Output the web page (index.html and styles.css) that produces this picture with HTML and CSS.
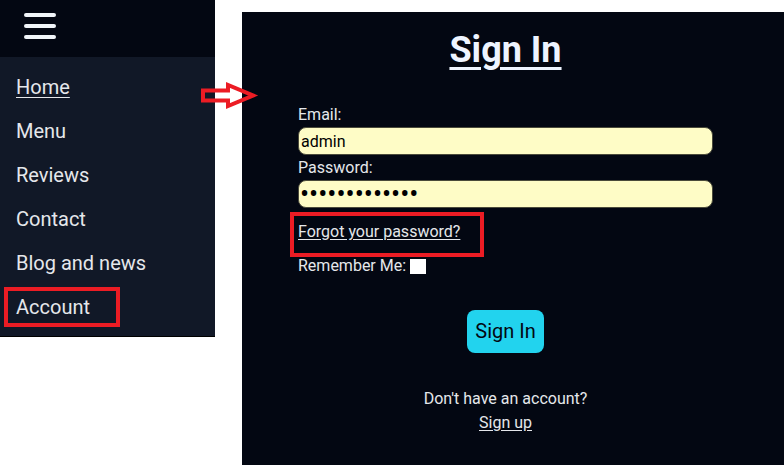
FILE: index.html
```html
<!DOCTYPE html>
<html lang="en">
<head>
<meta charset="utf-8">
<title>Sign In</title>
<link rel="stylesheet" href="styles.css">
</head>
<body>
<div class="page">
  <aside class="drawer">
    <div class="drawer-head">
      <span class="burger"><span></span><span></span><span></span></span>
    </div>
    <nav class="nav">
      <a class="nav-item current" href="#">Home</a>
      <a class="nav-item" href="#">Menu</a>
      <a class="nav-item" href="#">Reviews</a>
      <a class="nav-item" href="#">Contact</a>
      <a class="nav-item" href="#">Blog and news</a>
      <a class="nav-item marked" href="#">Account</a>
    </nav>
  </aside>
  <main class="panel">
    <div class="column">
      <h1 class="title">Sign In</h1>
      <form class="form">
        <label class="label" for="email">Email:</label>
        <input class="field" id="email" type="text" value="admin">
        <label class="label" for="pw">Password:</label>
        <input class="field pw" id="pw" type="password" value="password12345">
        <div class="forgot-row"><a class="forgot" href="#">Forgot your password?</a></div>
        <div class="remember">Remember Me:<input class="check" type="checkbox"></div>
        <div class="actions"><button class="btn" type="button">Sign In</button></div>
      </form>
      <p class="signup-q">Don't have an account?</p>
      <a class="signup" href="#">Sign up</a>
    </div>
  </main>
  <svg class="arrow" width="60" height="32" viewBox="200 80 60 32">
    <polygon points="203,90.5 228,90.5 228,85 253,95.5 228,106 228,100.5 203,100.5" fill="none" stroke="#ec1c24" stroke-width="4" stroke-linejoin="miter"/>
  </svg>
</div>
</body>
</html>
```

FILE: styles.css
```css
html, body {
  margin: 0;
  padding: 0;
  background: #ffffff;
  height: 100%;
  overflow: hidden;
}
body {
  font-family: Roboto, "Liberation Sans", Arial, sans-serif;
}
.page {
  position: relative;
  display: flex;
  align-items: flex-start;
  height: 465px;
}
.drawer {
  width: 215px;
  flex: none;
  background: #111827;
  border-bottom: 1px solid #000;
}
.drawer-head {
  height: 57px;
  background: #030712;
  padding: 13px 0 0 24px;
  box-sizing: border-box;
}
.burger {
  display: flex;
  flex-direction: column;
  gap: 7px;
  width: 32px;
}
.burger span {
  display: block;
  height: 4px;
  border-radius: 2px;
  background: #f1f5f9;
}
.nav {
  display: flex;
  flex-direction: column;
  padding: 8px 0 7px;
}
.nav-item {
  display: block;
  height: 44px;
  line-height: 44px;
  padding-left: 16px;
  font-size: 20px;
  color: #e5e7eb;
  text-decoration: none;
}
.nav-item.current {
  text-decoration: underline;
  text-underline-offset: 3px;
  text-decoration-thickness: 1px;
}
.nav-item.marked {
  position: relative;
}
.nav-item.marked::after {
  content: "";
  position: absolute;
  left: 4px;
  top: 2px;
  width: 116px;
  height: 40px;
  box-sizing: border-box;
  border: 4px solid #ec1c24;
}
.panel {
  flex: 1;
  margin: 12px 0 0 27px;
  height: 453px;
  background: #030712;
  color: #e5e7eb;
}
.column {
  width: 415px;
  margin-left: 56px;
  display: flex;
  flex-direction: column;
  align-items: center;
}
.title {
  margin: 17px 0 0;
  font-size: 36px;
  line-height: 42px;
  font-weight: 700;
  color: #eef4ff;
  text-decoration: underline;
  text-decoration-thickness: 3px;
  text-underline-offset: 5px;
}
.form {
  align-self: stretch;
  display: flex;
  flex-direction: column;
  margin-top: 34px;
}
.label {
  font-size: 16px;
  line-height: 20px;
  margin-bottom: 2px;
}
.field {
  height: 28px;
  box-sizing: border-box;
  margin: 0 0 3px;
  padding: 0 2px;
  border: 1px solid #4a4a3a;
  border-radius: 8px;
  background: #fefcc6;
  font-family: Roboto, "Liberation Sans", Arial, sans-serif;
  font-size: 16px;
  color: #000;
  outline: none;
}
.field.pw {
  font-size: 27px;
  padding-left: 1px;
}
.forgot-row {
  position: relative;
  margin-top: 11px;
  line-height: 19px;
  font-size: 16px;
}
.forgot-row::after {
  content: "";
  position: absolute;
  left: -8px;
  top: -10px;
  width: 194px;
  height: 45px;
  box-sizing: border-box;
  border: 4px solid #ec1c24;
}
.forgot {
  color: #e5e7eb;
  text-decoration: underline;
  text-underline-offset: 2px;
}
.remember {
  margin-top: 15px;
  font-size: 16px;
  line-height: 19px;
}
.check {
  appearance: none;
  -webkit-appearance: none;
  display: inline-block;
  width: 16px;
  height: 15px;
  margin: 0 0 0 4px;
  background: #ffffff;
  border: none;
  border-radius: 0;
  vertical-align: -3px;
}
.actions {
  display: flex;
  justify-content: center;
  margin-top: 35px;
}
.btn {
  height: 43px;
  padding: 0 8px;
  border: none;
  border-radius: 8px;
  background: #22d3ee;
  color: #030712;
  font-family: Roboto, "Liberation Sans", Arial, sans-serif;
  font-size: 20px;
  line-height: 23px;
}
.signup-q {
  margin: 36px 0 0;
  font-size: 16px;
  line-height: 19px;
}
.signup {
  margin-top: 5px;
  font-size: 16px;
  line-height: 19px;
  color: #e5e7eb;
  text-decoration: underline;
  text-underline-offset: 2px;
}
.arrow {
  position: absolute;
  left: 200px;
  top: 80px;
}
```
